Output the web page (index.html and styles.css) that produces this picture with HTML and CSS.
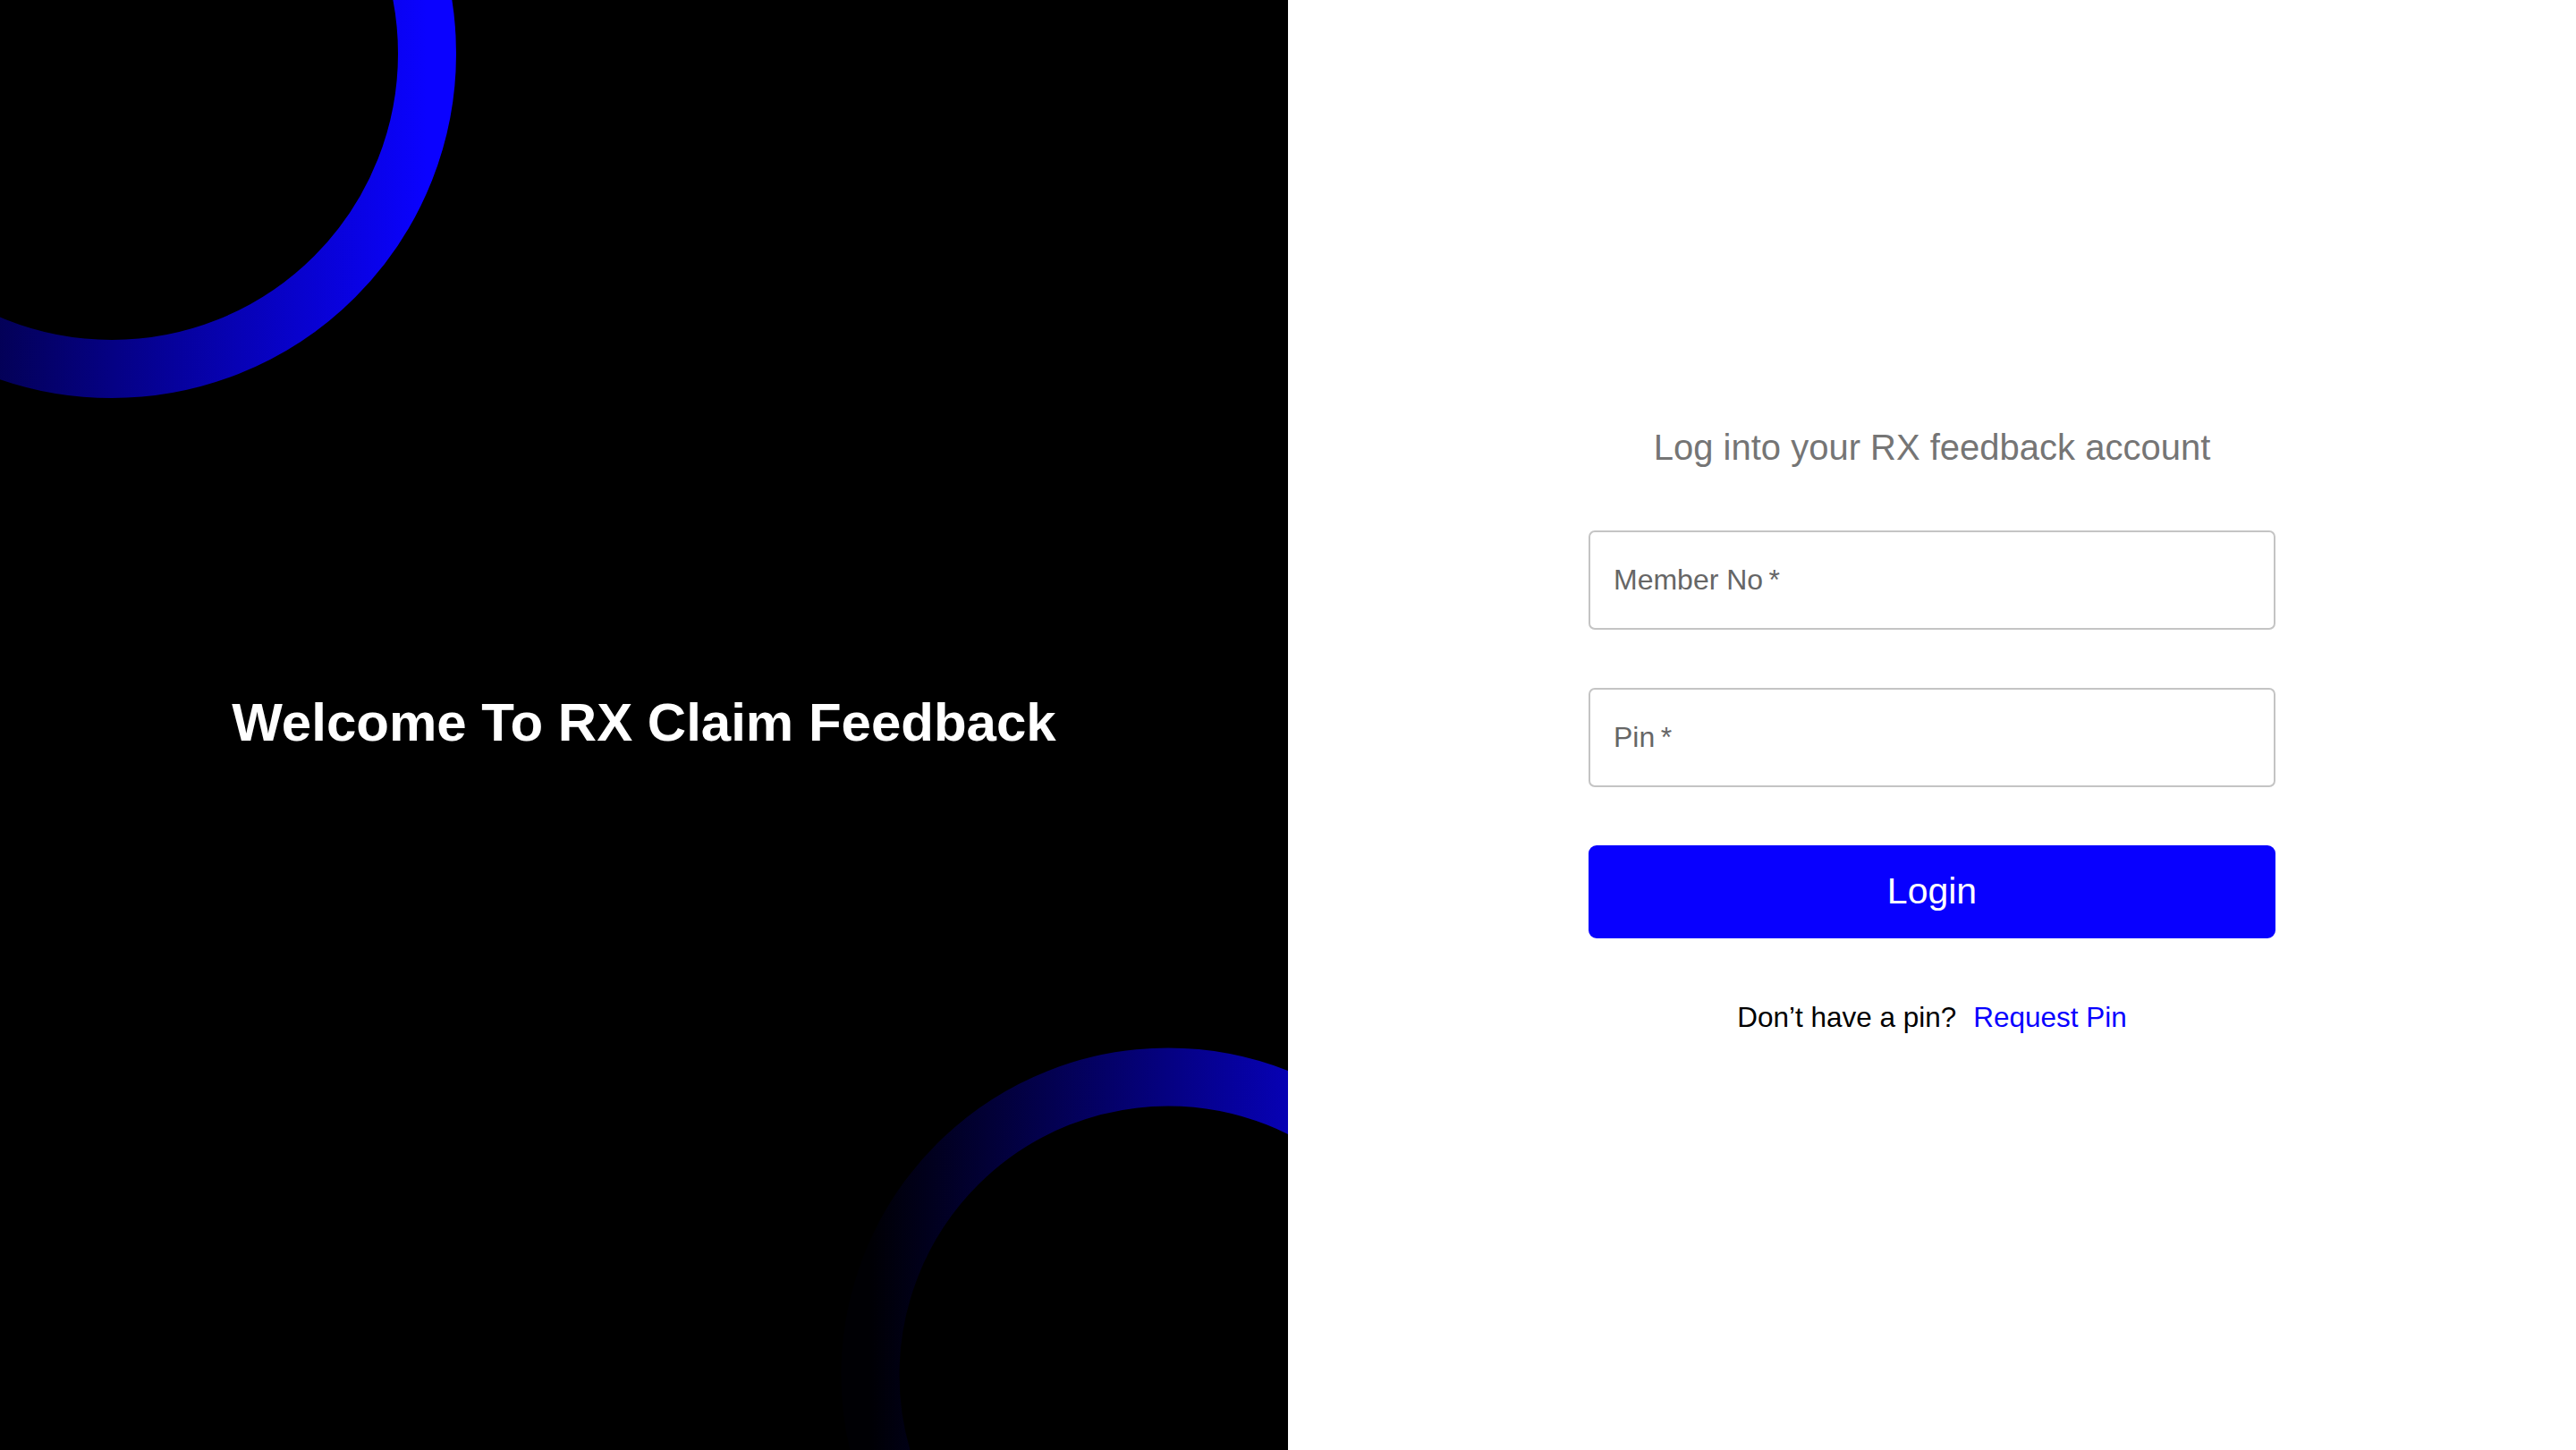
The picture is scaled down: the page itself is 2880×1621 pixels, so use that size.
FILE: index.html
```html
<!DOCTYPE html>
<html lang="en">
<head>
<meta charset="utf-8">
<title>RX Claim Feedback - Login</title>
<link rel="stylesheet" href="styles.css">
</head>
<body>
<main class="page">
  <section class="hero">
    <svg class="rings" viewBox="0 0 1440 1621" preserveAspectRatio="none" aria-hidden="true">
      <defs>
        <linearGradient id="ringTop" x1="0" y1="0" x2="1" y2="0">
          <stop offset="0" stop-color="#000008"/>
          <stop offset="1" stop-color="#0a02ff"/>
        </linearGradient>
        <linearGradient id="ringBottom" x1="0" y1="0" x2="1" y2="0">
          <stop offset="0" stop-color="#000004"/>
          <stop offset="1" stop-color="#0a02ff"/>
        </linearGradient>
      </defs>
      <circle cx="125" cy="60" r="352.5" fill="none" stroke="url(#ringTop)" stroke-width="65"/>
      <circle cx="1306" cy="1537" r="333" fill="none" stroke="url(#ringBottom)" stroke-width="65"/>
    </svg>
    <h1 class="hero-title">Welcome To RX Claim Feedback</h1>
  </section>
  <section class="auth">
    <form class="login-form" onsubmit="return false;">
      <h2 class="login-title">Log into your RX feedback account</h2>
      <div class="field">
        <span class="field-label">Member No&thinsp;*</span>
      </div>
      <div class="field">
        <span class="field-label">Pin&thinsp;*</span>
      </div>
      <button class="login-btn" type="submit">Login</button>
      <p class="signup">Don’t have a pin? <a class="signup-link" href="#">Request Pin</a></p>
    </form>
  </section>
</main>
</body>
</html>
```
FILE: styles.css
```css
* {
  box-sizing: border-box;
}

html, body {
  margin: 0;
  padding: 0;
  height: 100%;
}

body {
  font-family: "Liberation Sans", Arial, Helvetica, sans-serif;
  background: #ffffff;
}

.page {
  display: grid;
  grid-template-columns: 1440px 1fr;
  height: 100vh;
  min-height: 1621px;
}

.hero {
  position: relative;
  overflow: hidden;
  background: #000000;
  display: flex;
  align-items: center;
  justify-content: center;
}

.rings {
  position: absolute;
  left: 0;
  top: 0;
  width: 1440px;
  height: 1621px;
}

.hero-title {
  position: relative;
  margin: -6px 0 0 0;
  color: #ffffff;
  font-size: 60px;
  font-weight: 700;
  line-height: normal;
  letter-spacing: 0;
}

.auth {
  background: #ffffff;
  display: flex;
  align-items: center;
  justify-content: center;
  padding-top: 13px;
}

.login-form {
  width: 768px;
  display: flex;
  flex-direction: column;
  align-items: stretch;
}

.login-title {
  margin: 0 0 69px 0;
  text-align: center;
  font-size: 40px;
  line-height: 48px;
  font-weight: 400;
  color: #757575;
}

.field {
  height: 111px;
  margin-bottom: 65px;
  border: 2px solid #c4c4c4;
  border-radius: 7px;
  display: flex;
  align-items: center;
  padding-left: 26px;
}

.field-label {
  font-size: 32px;
  color: #666666;
}

.login-btn {
  height: 104px;
  border: none;
  border-radius: 9px;
  background: #0800ff;
  color: #ffffff;
  font-family: inherit;
  font-size: 41px;
  font-weight: 400;
  cursor: pointer;
}

.signup {
  margin: 66px 0 0 0;
  text-align: center;
  font-size: 31.5px;
  line-height: 44px;
  color: #000000;
}

.signup-link {
  margin-left: 10px;
  color: #0800ff;
  text-decoration: none;
}
```
